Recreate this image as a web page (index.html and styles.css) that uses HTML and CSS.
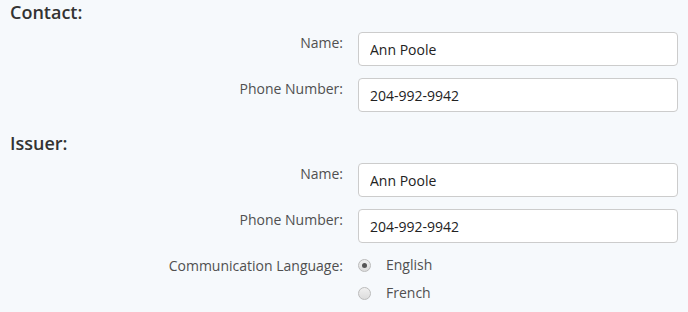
FILE: index.html
```html
<!DOCTYPE html>
<html>
<head>
<meta charset="utf-8">
<link rel="stylesheet" href="styles.css">
</head>
<body>
<section class="group">
  <h2 class="group-title">Contact:</h2>
  <div class="field">
    <label class="field-label">Name:</label>
    <input class="field-input" type="text" value="Ann Poole">
  </div>
  <div class="field">
    <label class="field-label">Phone Number:</label>
    <input class="field-input" type="text" value="204-992-9942">
  </div>
</section>
<section class="group">
  <h2 class="group-title">Issuer:</h2>
  <div class="field">
    <label class="field-label">Name:</label>
    <input class="field-input" type="text" value="Ann Poole">
  </div>
  <div class="field">
    <label class="field-label">Phone Number:</label>
    <input class="field-input" type="text" value="204-992-9942">
  </div>
  <div class="field">
    <label class="field-label">Communication Language:</label>
    <div class="radio-list">
      <label class="radio-option"><input class="radio" type="radio" name="lang" checked><span>English</span></label>
      <label class="radio-option"><input class="radio" type="radio" name="lang"><span>French</span></label>
    </div>
  </div>
</section>
</body>
</html>
```
FILE: styles.css
```css
html, body {
  margin: 0;
  padding: 0;
  background: #f6f9fc;
}
body {
  font-family: "Open Sans", "Liberation Sans", sans-serif;
  padding: 0 10px;
  color: #555;
}
.group {
  display: flex;
  flex-direction: column;
  gap: 12px;
}
.group + .group {
  margin-top: 19px;
}
.group-title {
  margin: 0 0 -4px 0;
  font-size: 18px;
  font-weight: 600;
  line-height: 24px;
  color: #333;
}
.field {
  display: grid;
  grid-template-columns: 333px 320px;
  column-gap: 15px;
  align-items: start;
}
.field-label {
  text-align: right;
  font-size: 14px;
  line-height: 20px;
  padding-top: 1px;
  color: #505050;
}
.field-input {
  box-sizing: border-box;
  height: 34px;
  width: 320px;
  margin: 0;
  border: 1px solid #ccc;
  border-radius: 4px;
  background: #fff;
  padding: 0 11px;
  font-family: "Open Sans", "Liberation Sans", sans-serif;
  font-size: 14px;
  color: #222;
  outline: none;
}
.radio-list {
  display: flex;
  flex-direction: column;
  gap: 8px;
}
.radio-option {
  display: flex;
  align-items: center;
  gap: 15px;
  font-size: 14px;
  line-height: 20px;
  color: #505050;
}
.radio {
  appearance: none;
  -webkit-appearance: none;
  box-sizing: border-box;
  width: 13px;
  height: 13px;
  margin: 0;
  border: 1px solid #bbb;
  border-radius: 50%;
  background: linear-gradient(#f0f0f0, #dcdcdc);
  position: relative;
}
.radio:checked::after {
  content: "";
  position: absolute;
  left: 3px;
  top: 3px;
  width: 5px;
  height: 5px;
  border-radius: 50%;
  background: #555;
}
```
